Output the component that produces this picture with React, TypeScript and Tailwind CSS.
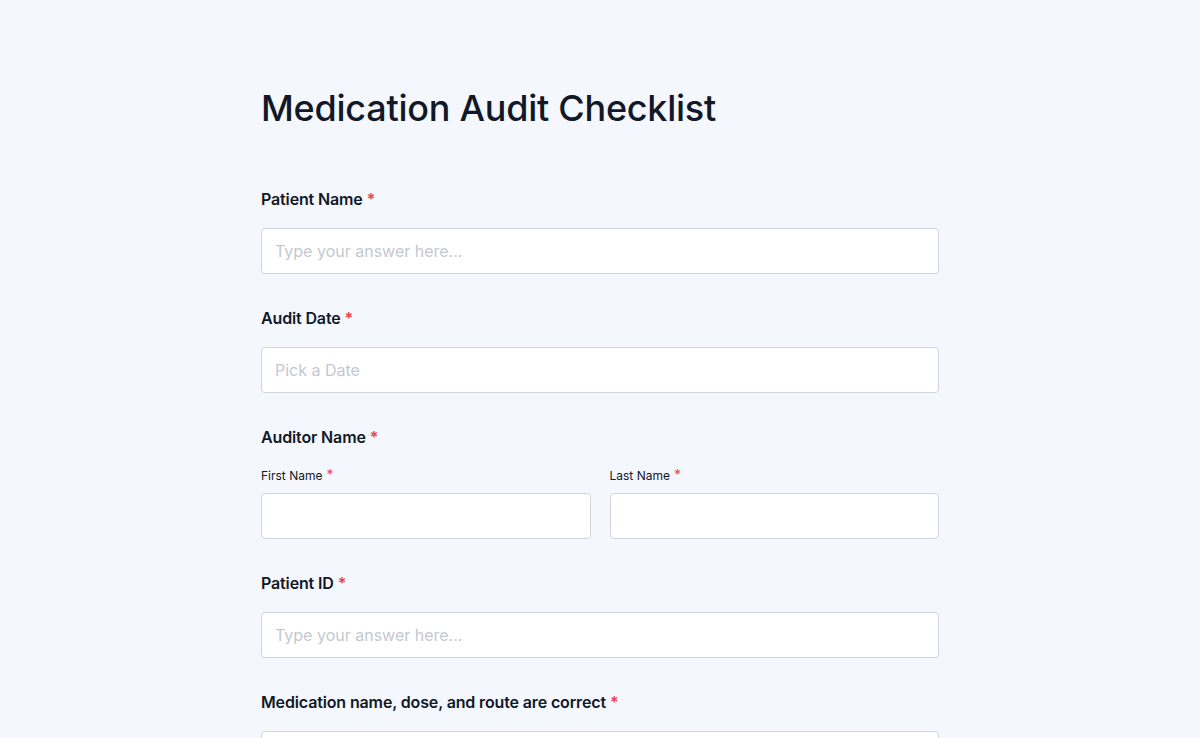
const Req = () => <span className="ml-1 text-[#ef4444]">*</span>;

type FieldProps = {
  label: string;
  placeholder?: string;
};

const Field = ({ label, placeholder }: FieldProps) => (
  <div className="flex flex-col">
    <label className="text-[16px] leading-6 font-semibold tracking-[-0.14px] text-[#111827]">
      {label}
      <Req />
    </label>
    <input
      className="mt-[17px] h-[46px] w-full rounded-[4px] border border-[#d1d5db] bg-white px-[13px] text-[16px] text-[#111827] placeholder:text-[#c4c8d0] outline-none"
      placeholder={placeholder}
    />
  </div>
);

const SubField = ({ label }: { label: string }) => (
  <div className="flex flex-1 flex-col">
    <label className="text-[12px] leading-5 text-[#111827]">
      {label}
      <span className="ml-1 text-[14px] text-[#ef4444]">*</span>
    </label>
    <input className="mt-[7px] h-[46px] w-full rounded-[4px] border border-[#d1d5db] bg-white px-[13px] outline-none" />
  </div>
);

export default function App() {
  return (
    <div
      className="min-h-screen bg-[#f4f7fe]"
      style={{ fontFamily: "Inter, 'Liberation Sans', sans-serif" }}
    >
      <div className="mx-auto w-[678px] pt-[84px]">
        <h1 className="text-[36px] leading-[48px] font-medium tracking-[-0.25px] text-[#111827]">
          Medication Audit Checklist
        </h1>

        <div className="mt-[55px] flex flex-col gap-[32px]">
          <Field label="Patient Name" placeholder="Type your answer here..." />
          <Field label="Audit Date" placeholder="Pick a Date" />

          <div className="flex flex-col">
            <label className="text-[16px] leading-6 font-semibold tracking-[-0.14px] text-[#111827]">
              Auditor Name
              <Req />
            </label>
            <div className="mt-[16px] flex gap-[19px]">
              <SubField label="First Name" />
              <SubField label="Last Name" />
            </div>
          </div>

          <Field label="Patient ID" placeholder="Type your answer here..." />
          <Field label="Medication name, dose, and route are correct" />
        </div>
      </div>
    </div>
  );
}
